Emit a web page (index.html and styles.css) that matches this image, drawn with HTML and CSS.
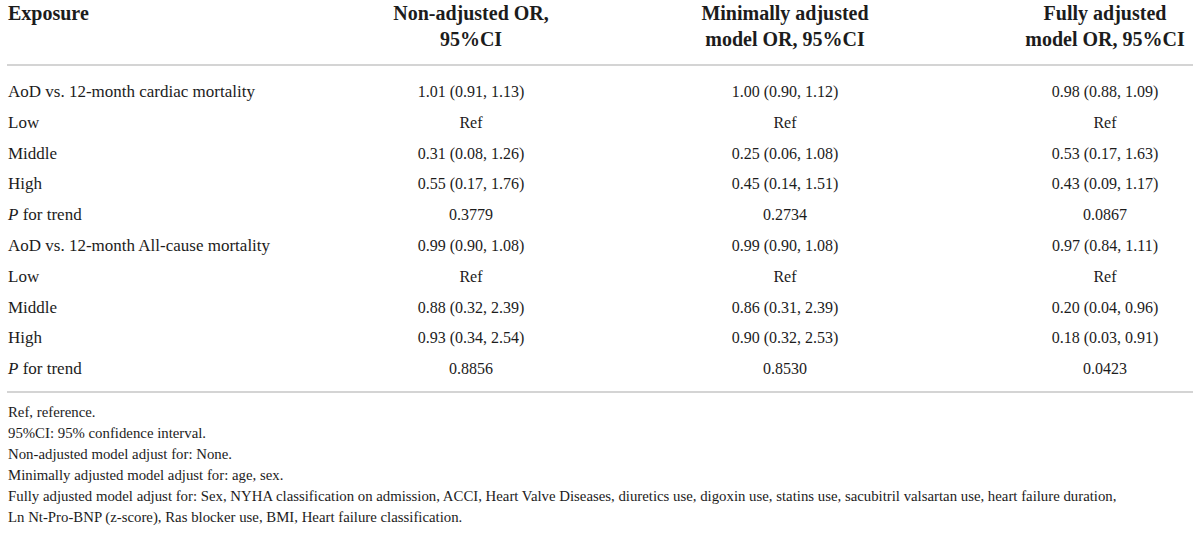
FILE: index.html
```html
<!DOCTYPE html>
<html lang="en">
<head>
  <meta charset="UTF-8">
  <title>AoD and mortality</title>
  <link rel="stylesheet" href="styles.css">
</head>
<body>
  <div class="table">
    <div class="row head">
      <div class="cell label">Exposure</div>
      <div class="cell">Non-adjusted OR,<br>95%CI</div>
      <div class="cell">Minimally adjusted<br>model OR, 95%CI</div>
      <div class="cell">Fully adjusted<br>model OR, 95%CI</div>
    </div>
    <div class="body">
      <div class="row">
        <div class="cell label">AoD vs. 12-month cardiac mortality</div>
        <div class="cell">1.01 (0.91, 1.13)</div>
        <div class="cell">1.00 (0.90, 1.12)</div>
        <div class="cell">0.98 (0.88, 1.09)</div>
      </div>
      <div class="row">
        <div class="cell label">Low</div>
        <div class="cell">Ref</div>
        <div class="cell">Ref</div>
        <div class="cell">Ref</div>
      </div>
      <div class="row">
        <div class="cell label">Middle</div>
        <div class="cell">0.31 (0.08, 1.26)</div>
        <div class="cell">0.25 (0.06, 1.08)</div>
        <div class="cell">0.53 (0.17, 1.63)</div>
      </div>
      <div class="row">
        <div class="cell label">High</div>
        <div class="cell">0.55 (0.17, 1.76)</div>
        <div class="cell">0.45 (0.14, 1.51)</div>
        <div class="cell">0.43 (0.09, 1.17)</div>
      </div>
      <div class="row">
        <div class="cell label"><i>P</i> for trend</div>
        <div class="cell">0.3779</div>
        <div class="cell">0.2734</div>
        <div class="cell">0.0867</div>
      </div>
      <div class="row">
        <div class="cell label">AoD vs. 12-month All-cause mortality</div>
        <div class="cell">0.99 (0.90, 1.08)</div>
        <div class="cell">0.99 (0.90, 1.08)</div>
        <div class="cell">0.97 (0.84, 1.11)</div>
      </div>
      <div class="row">
        <div class="cell label">Low</div>
        <div class="cell">Ref</div>
        <div class="cell">Ref</div>
        <div class="cell">Ref</div>
      </div>
      <div class="row">
        <div class="cell label">Middle</div>
        <div class="cell">0.88 (0.32, 2.39)</div>
        <div class="cell">0.86 (0.31, 2.39)</div>
        <div class="cell">0.20 (0.04, 0.96)</div>
      </div>
      <div class="row">
        <div class="cell label">High</div>
        <div class="cell">0.93 (0.34, 2.54)</div>
        <div class="cell">0.90 (0.32, 2.53)</div>
        <div class="cell">0.18 (0.03, 0.91)</div>
      </div>
      <div class="row">
        <div class="cell label"><i>P</i> for trend</div>
        <div class="cell">0.8856</div>
        <div class="cell">0.8530</div>
        <div class="cell">0.0423</div>
      </div>
    </div>
  </div>
  <div class="notes">
    <p>Ref, reference.</p>
    <p>95%CI: 95% confidence interval.</p>
    <p>Non-adjusted model adjust for: None.</p>
    <p>Minimally adjusted model adjust for: age, sex.</p>
    <p>Fully adjusted model adjust for: Sex, NYHA classification on admission, ACCI, Heart Valve Diseases, diuretics use, digoxin use, statins use, sacubitril valsartan use, heart failure duration,<br>Ln Nt-Pro-BNP (z-score), Ras blocker use, BMI, Heart failure classification.</p>
  </div>
</body>
</html>
```

FILE: styles.css
```css
body {
  margin: 0 7px;
  background-color: #ffffff;
  color: #1c1c1c;
  font-family: "Liberation Serif", "Times New Roman", serif;
}
.table {
  width: 1186px;
}
.row {
  display: grid;
  grid-template-columns: 382px 164px 464px 176px;
}
.cell {
  text-align: center;
  white-space: nowrap;
}
.cell.label {
  text-align: left;
  padding-left: 1px;
}
.head {
  font-weight: bold;
  font-size: 20px;
  line-height: 26px;
  padding-bottom: 12px;
  border-bottom: 2px solid #d4d4d4;
}
.body {
  font-size: 16px;
  line-height: 30.8px;
  padding: 11px 0 6px;
  border-bottom: 2px solid #d4d4d4;
}
.body .label {
  font-size: 17px;
}
.notes {
  padding-top: 9px;
  font-size: 14.8px;
  line-height: 21px;
}
.notes p {
  margin: 0;
  padding-left: 1px;
}
```
